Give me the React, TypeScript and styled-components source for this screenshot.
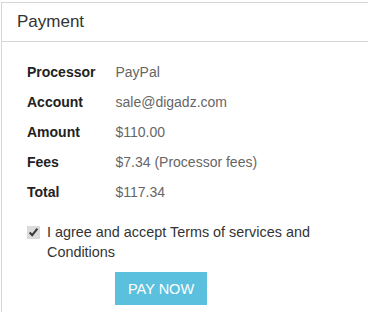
import styled, { createGlobalStyle } from "styled-components";

const GlobalStyle = createGlobalStyle`
  body {
    margin: 0;
    background: #ffffff;
    font-family: "Liberation Sans", Arial, sans-serif;
    font-size: 14px;
    color: #333333;
  }
`;

const Panel = styled.div`
  margin: 2px 0 0 1px;
  border: 1px solid #d6d6d6;
  border-right: none;
  height: 320px;
  background: #ffffff;
`;

const PanelHeading = styled.div`
  padding: 0 15px;
  height: 38px;
  line-height: 38px;
  font-size: 17px;
  color: #333333;
  border-bottom: 1px solid #d6d6d6;
`;

const PanelBody = styled.div`
  padding: 15px 15px 0 15px;
`;

const DetailsTable = styled.table`
  border-collapse: collapse;
  margin-bottom: 15px;
`;

const Label = styled.th`
  text-align: left;
  font-weight: bold;
  color: #222222;
  padding: 0 10px;
  height: 30px;
  width: 67px;
`;

const Value = styled.td`
  color: #666666;
  padding: 0 10px;
  height: 30px;
`;

const AgreeRow = styled.label`
  display: flex;
  align-items: flex-start;
  gap: 7px;
  padding: 0 10px;
  line-height: 20px;
  font-size: 14.4px;
  color: #333333;
`;

const Checkbox = styled.input`
  margin: 4px 0 0 0;
  width: 13px;
  height: 13px;
  flex-shrink: 0;
  accent-color: #dcdcdc;
`;

const Actions = styled.div`
  padding: 10px 0 0 98px;
`;

const PayButton = styled.button`
  background: #5bc0de;
  border: none;
  color: #ffffff;
  font-family: "Liberation Sans", Arial, sans-serif;
  font-size: 14.5px;
  height: 33px;
  padding: 0 13px;
  cursor: pointer;
`;

const rows: [string, string][] = [
  ["Processor", "PayPal"],
  ["Account", "sale@digadz.com"],
  ["Amount", "$110.00"],
  ["Fees", "$7.34 (Processor fees)"],
  ["Total", "$117.34"],
];

export default function App() {
  return (
    <>
      <GlobalStyle />
      <Panel>
        <PanelHeading>Payment</PanelHeading>
        <PanelBody>
          <DetailsTable>
            <tbody>
              {rows.map(([label, value]) => (
                <tr key={label}>
                  <Label>{label}</Label>
                  <Value>{value}</Value>
                </tr>
              ))}
            </tbody>
          </DetailsTable>
          <AgreeRow>
            <Checkbox type="checkbox" defaultChecked />
            <span>I agree and accept Terms of services and Conditions</span>
          </AgreeRow>
          <Actions>
            <PayButton>PAY NOW</PayButton>
          </Actions>
        </PanelBody>
      </Panel>
    </>
  );
}
